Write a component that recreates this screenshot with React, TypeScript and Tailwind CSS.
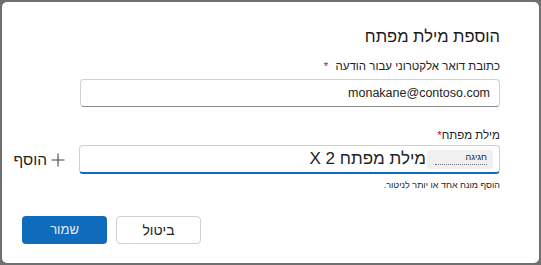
import React from 'react';

const font = { fontFamily: '"Liberation Sans", Arial, sans-serif' };

export default function App() {
  return (
    <div className="w-[541px] h-[265px] bg-[#6f6f6f] p-[2px]" style={font}>
      <div dir="rtl" className="h-full w-full bg-white rounded-[5px] pr-[39px] pl-[13px] pt-[22px] text-[#242424]">
        <h1 className="text-[16.5px] leading-[24px] font-normal text-[#1a1a1a]">הוספת מילת מפתח</h1>

        {/* email */}
        <div className="mt-[10px] text-[11.5px] leading-[16px]">
          כתובת דואר אלקטרוני עבור הודעה <span className="text-[#c50f1f] mr-[4px]">*</span>
        </div>
        <div className="mt-[5px] w-[420px] h-[28px] border border-[#d1d1d1] border-b-[#8a8a8a] rounded-[4px] flex items-center pr-[9px] text-[12.5px]">
          monakane@contoso.com
        </div>

        {/* keyword */}
        <div className="mt-[20px] text-[11.5px] leading-[16px]">
          מילת מפתח<span className="text-[#c50f1f]">*</span>
        </div>
        <div className="mt-[2px] flex items-center gap-[13px]">
          <div className="shrink-0 w-[421px] h-[29px] border border-[#d1d1d1] border-b-2 border-b-[#0f6cbd] rounded-[4px] flex items-center pr-[6px]">
            <div className="w-[66px] h-[19px] bg-[#f0f0f0] rounded-[3px] flex flex-col items-start pr-[6px] pt-[2px]">
              <span className="text-[9px] leading-[10px] text-[#242424]">חגיגה</span>
              <div className="mt-[2px] w-[52px] border-t border-dotted border-[#707070]" />
            </div>
            <span className="mr-[1px] text-[17px] leading-[24px]">מילת מפתח 2 X</span>
          </div>
          <div className="shrink-0 flex items-center gap-[3px] text-[15.5px] leading-[22px]">
            <svg width="16" height="16" viewBox="0 0 16 16" className="text-[#424242]">
              <path d="M8 1.5v13M1.5 8h13" stroke="currentColor" strokeWidth="1.1" fill="none" />
            </svg>
            <span>הוסף</span>
          </div>
        </div>
        <div className="mt-[5px] text-[9px] leading-[12px]">הוסף מונח אחד או יותר לניטור.</div>

        {/* buttons */}
        <div className="mt-[25px] flex justify-end gap-[9px] pl-[7px]">
          <button className="w-[85px] h-[28px] border border-[#d1d1d1] rounded-[4px] bg-white text-[14px] text-[#242424] flex items-center justify-center">
            ביטול
          </button>
          <button className="w-[85px] h-[28px] rounded-[4px] bg-[#0f6cbd] text-[13px] text-[#e6eef7] flex items-center justify-center">
            שמור
          </button>
        </div>
      </div>
    </div>
  );
}
